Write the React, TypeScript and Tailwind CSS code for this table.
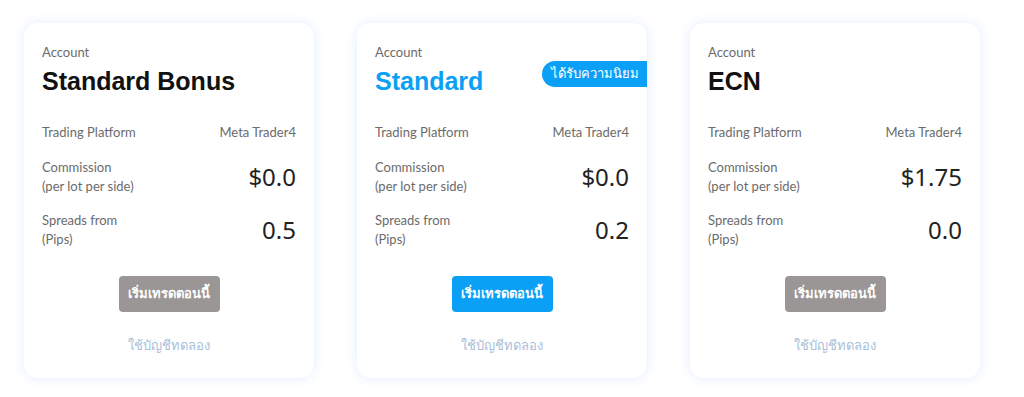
import React from 'react';

type Plan = {
    name: string;
    commission: string;
    spread: string;
    featured?: boolean;
};

const plans: Plan[] = [
    { name: 'Standard Bonus', commission: '$0.0', spread: '0.5' },
    { name: 'Standard', commission: '$0.0', spread: '0.2', featured: true },
    { name: 'ECN', commission: '$1.75', spread: '0.0' },
];

const body = { fontFamily: 'Lato, "Noto Sans", sans-serif' };
const numbers = { fontFamily: '"Noto Sans", sans-serif' };

const PlanCard = ({ plan }: { plan: Plan }) => (
    <div className="relative w-[290px] h-[355px] bg-white rounded-[14px] shadow-[0_0_12px_rgba(120,170,255,0.22)] px-[18px] pt-[20px] flex flex-col" style={body}>
        {plan.featured && (
            <div className="absolute right-0 top-[38px] h-[26px] pl-[9px] pr-[8px] flex items-center bg-[#0aa0f6] text-white text-[13px] font-medium rounded-l-full">
                ได้รับความนิยม
            </div>
        )}
        <p className="text-[13px] leading-[18px] text-[#6b6b6b]">Account</p>
        <h2
            className={`text-[25px] leading-[32px] font-bold mt-[4px] ${plan.featured ? 'text-[#0aa0f6]' : 'text-[#111111]'}`}
            style={{ fontFamily: '"Liberation Sans", Arial, sans-serif' }}
        >
            {plan.name}
        </h2>

        <div className="flex justify-between items-center mt-[26px] text-[13px] leading-[18px] text-[#6b6b6b]">
            <span>Trading Platform</span>
            <span>Meta Trader4</span>
        </div>

        <div className="flex justify-between items-center mt-[17px]">
            <div className="text-[13px] leading-[19px] text-[#6b6b6b]">
                <p>Commission</p>
                <p>(per lot per side)</p>
            </div>
            <span className="text-[24px] text-[#222222]" style={numbers}>{plan.commission}</span>
        </div>

        <div className="flex justify-between items-center mt-[15px]">
            <div className="text-[13px] leading-[19px] text-[#6b6b6b]">
                <p>Spreads from</p>
                <p>(Pips)</p>
            </div>
            <span className="text-[24px] text-[#222222]" style={numbers}>{plan.spread}</span>
        </div>

        <div className="flex flex-col items-center mt-[27px]">
            <button
                className={`w-[101px] h-[36px] rounded-[4px] text-white text-[13px] font-semibold ${plan.featured ? 'bg-[#0aa0f6]' : 'bg-[#9a9695]'}`}
            >
                เริ่มเทรดตอนนี้
            </button>
            <a className="mt-[24px] text-[13px] text-[#a9c0d8]">ใช้บัญชีทดลอง</a>
        </div>
    </div>
);

export default function App() {
    return (
        <div className="w-[1024px] h-[397px] bg-white pl-[24px] pt-[23px] flex gap-[43px]">
            {plans.map(p => (
                <PlanCard key={p.name} plan={p} />
            ))}
        </div>
    );
}
